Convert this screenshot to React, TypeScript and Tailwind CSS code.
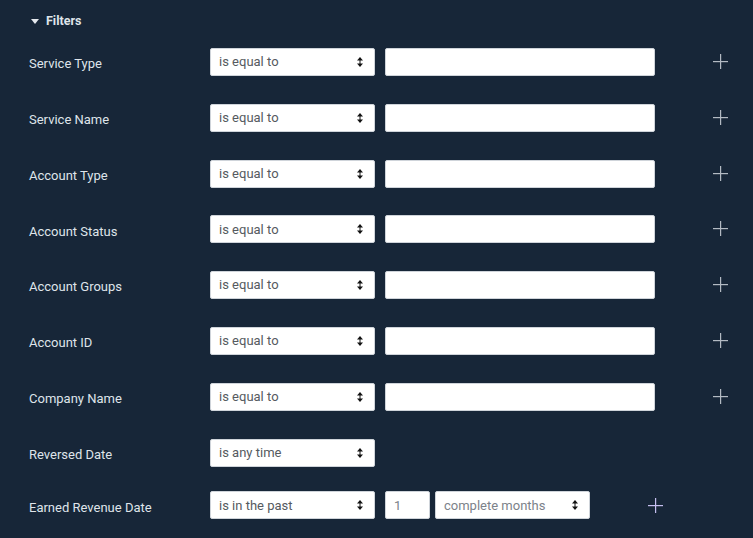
import React from "react";

const Arrows = () => (
  <svg width="6" height="10" viewBox="0 0 6 10" className="shrink-0">
    <path d="M3 0 L6 3.6 H0 Z" fill="#111" />
    <rect x="2.5" y="3" width="1" height="4" fill="#111" />
    <path d="M3 10 L6 6.4 H0 Z" fill="#111" />
  </svg>
);

const Plus = ({ color }: { color: string }) => (
  <svg width="15" height="15" viewBox="0 0 15 15">
    <rect x="7" y="0" width="1.2" height="15" fill={color} />
    <rect x="0" y="7" width="15" height="1.2" fill={color} />
  </svg>
);

const Select = ({ text, w, muted }: { text: string; w: string; muted?: boolean }) => (
  <div
    className={`${w} h-[28px] bg-white rounded-[2px] border border-[#cfd4da] flex items-center justify-between pl-[8px] pr-[11px] text-[13px] ${muted ? "text-[#7c828a]" : "text-[#555a60]"}`}
  >
    <span>{text}</span>
    <Arrows />
  </div>
);

const rows = [
  "Service Type",
  "Service Name",
  "Account Type",
  "Account Status",
  "Account Groups",
  "Account ID",
  "Company Name",
];

export default function App() {
  return (
    <div
      className="w-[753px] h-[538px] bg-[#172638] overflow-hidden text-[#dfe4ea]"
      style={{ fontFamily: "Roboto, 'Liberation Sans', sans-serif" }}
    >
      <div className="pl-[31px] pt-[14px] flex items-center h-[29px]">
        <svg width="8" height="5" viewBox="0 0 8 5" className="mr-[7px]">
          <path d="M0 0 H8 L4 5 Z" fill="#e5e9ee" />
        </svg>
        <span className="text-[12.5px] font-bold">Filters</span>
      </div>
      <div className="pt-[19px] flex flex-col gap-[27.8px]">
        {rows.map((r) => (
          <div key={r} className="flex items-center h-[28px]">
            <div className="w-[210px] pl-[29px] text-[13px] pt-[4px]">{r}</div>
            <Select text="is equal to" w="w-[165px]" />
            <div className="ml-[10px] w-[270px] h-[28px] bg-white rounded-[2px] border border-[#cfd4da]" />
            <div className="ml-[58px] -mt-[1px]">
              <Plus color="#b3bac3" />
            </div>
          </div>
        ))}
        <div className="flex items-center h-[28px]">
          <div className="w-[210px] pl-[29px] text-[13px] pt-[4px]">Reversed Date</div>
          <Select text="is any time" w="w-[165px]" />
        </div>
        <div className="flex items-center h-[28px] -mt-[3px]">
          <div className="w-[210px] pl-[29px] text-[13px] pt-[4px]">Earned Revenue Date</div>
          <Select text="is in the past" w="w-[165px]" />
          <div className="ml-[10px] w-[45px] h-[28px] bg-white rounded-[2px] border border-[#cfd4da] flex items-center pl-[8px] text-[13px] text-[#7c828a]">
            1
          </div>
          <div className="ml-[5px]">
            <Select text="complete months" w="w-[155px]" muted />
          </div>
          <div className="ml-[58px]">
            <Plus color="#c5bff0" />
          </div>
        </div>
      </div>
    </div>
  );
}
